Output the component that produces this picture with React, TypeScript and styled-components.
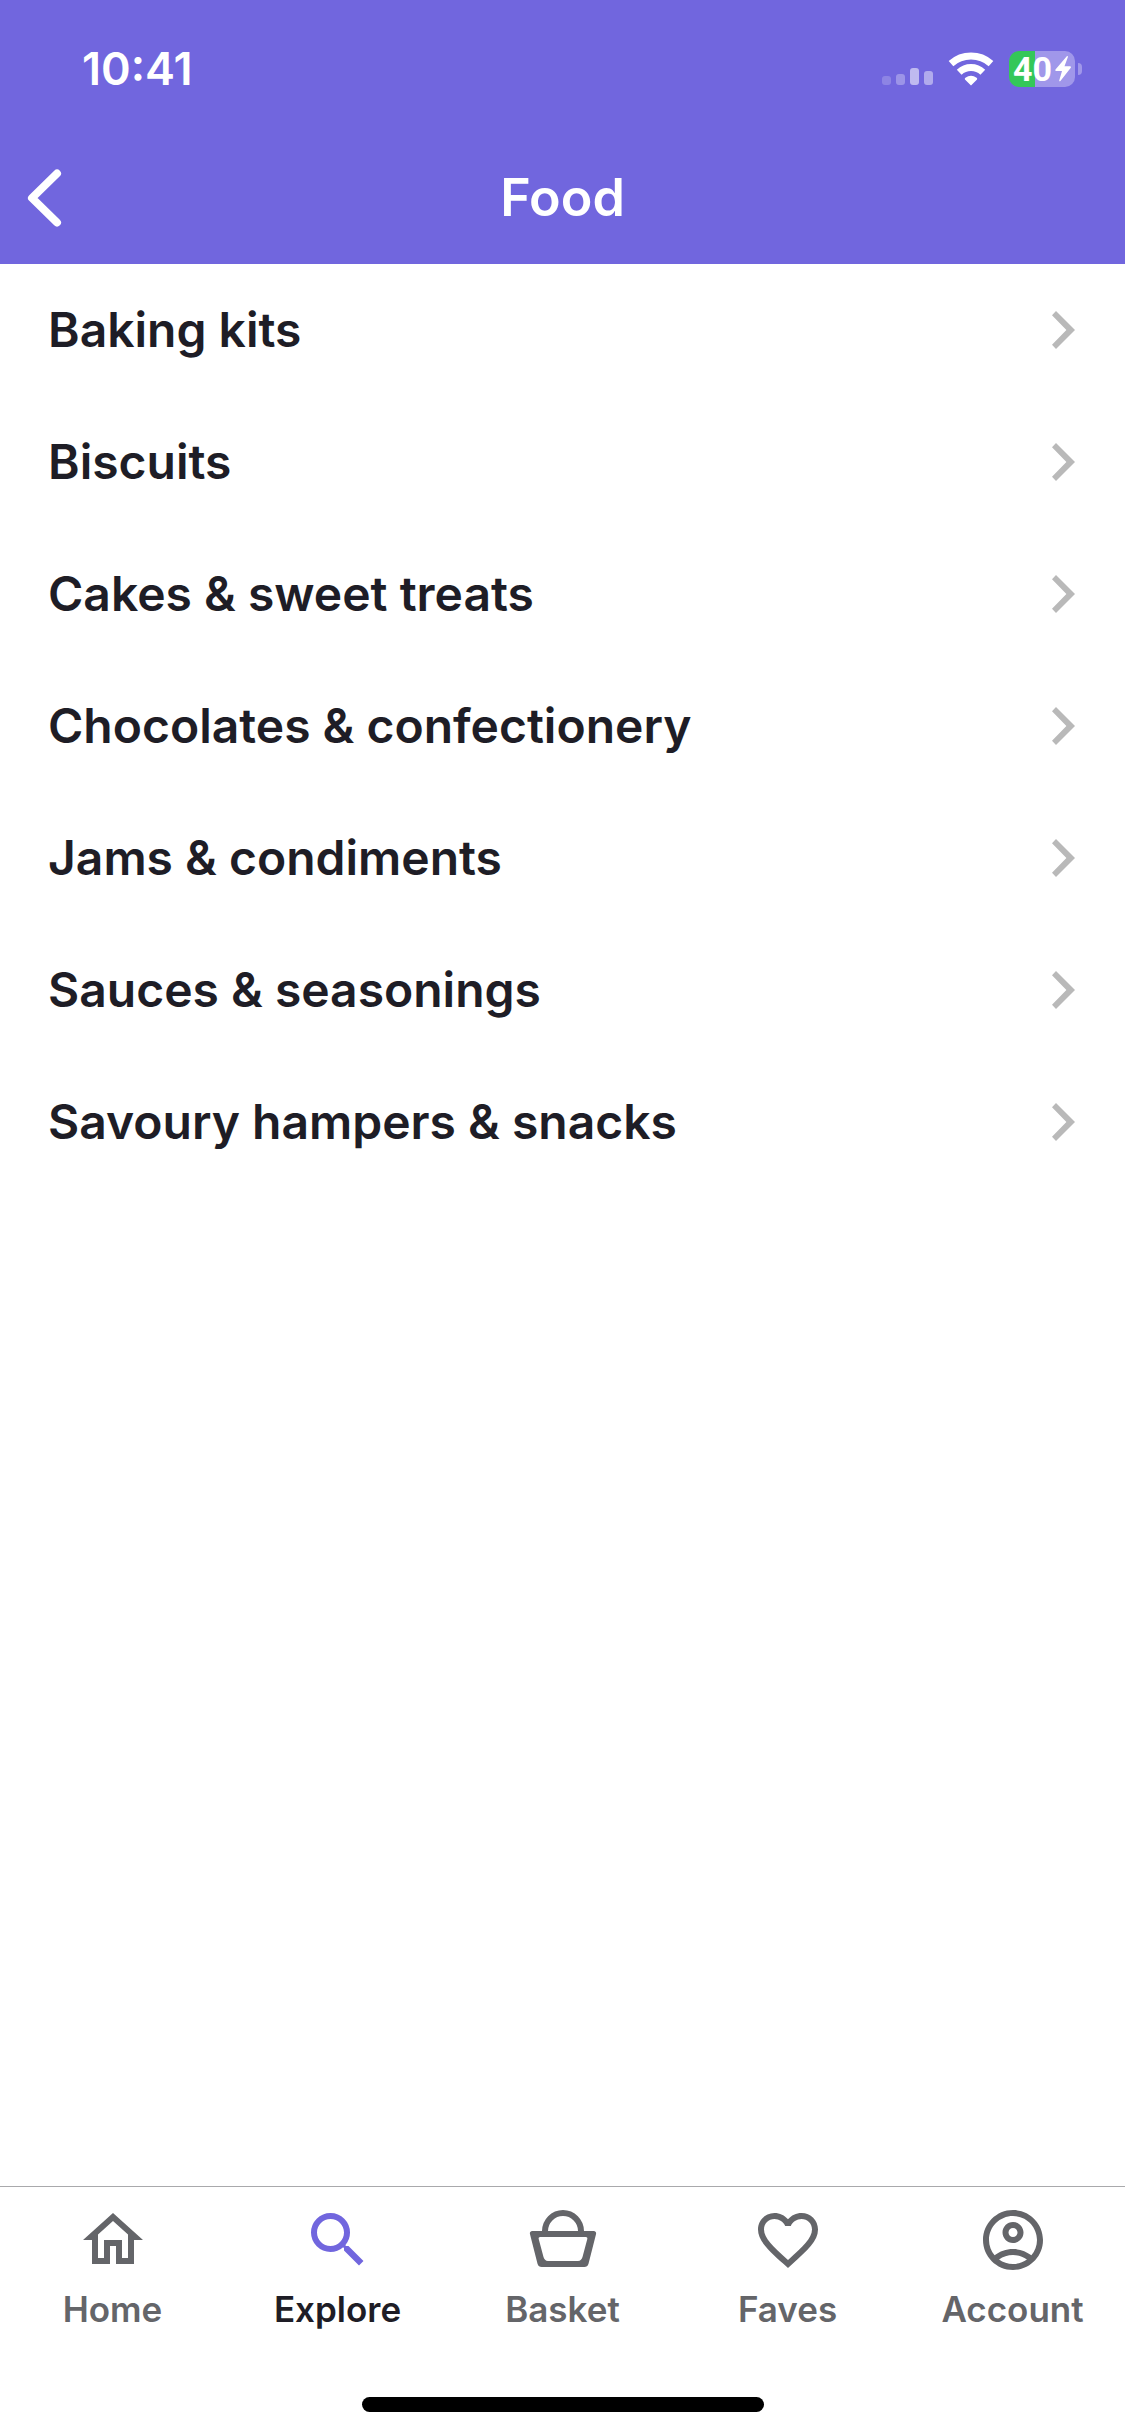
import React from "react";
import styled, { createGlobalStyle } from "styled-components";

const color = {
  brand: "#7166de",
  ink: "#1e1d26",
  muted: "#646569",
  chevron: "#b9b9b9",
  line: "#a9a9ac",
};

const GlobalStyle = createGlobalStyle`
  *, *::before, *::after { box-sizing: border-box; }
  body { margin: 0; background: #fff; }
`;

const Screen = styled.div`
  display: flex;
  flex-direction: column;
  min-height: 100vh;
  font-family: Inter, "Open Sans", sans-serif;
  color: ${color.ink};
`;

const Header = styled.header`
  background: ${color.brand};
  color: #fff;
`;

const StatusBar = styled.div`
  display: flex;
  align-items: center;
  justify-content: space-between;
  height: 138px;
  padding: 0 43px 0 82px;
`;

const Clock = styled.time`
  font-size: 45px;
  font-weight: 600;
  line-height: 54px;
`;

const StatusIcons = styled.div`
  display: flex;
  align-items: center;
  gap: 15px;
`;

const Battery = styled.div`
  display: flex;
  align-items: center;
  gap: 3px;
`;

const BatteryBody = styled.div`
  display: flex;
  align-items: center;
  justify-content: center;
  gap: 3px;
  width: 66px;
  height: 36px;
  border-radius: 10px;
  background: linear-gradient(90deg, #34c759 40%, #a097ea 40%);
  font: 700 34px/36px Roboto, sans-serif;
`;

const BatteryTip = styled.span`
  width: 4px;
  height: 12px;
  border-radius: 0 4px 4px 0;
  background: #a097ea;
`;

const TitleBar = styled.div`
  display: grid;
  grid-template-columns: 1fr auto 1fr;
  align-items: center;
  height: 126px;
  padding: 0 24px 7px;
`;

const BackButton = styled.button`
  display: flex;
  justify-self: start;
  padding: 0;
  border: 0;
  background: none;
  color: inherit;
  cursor: pointer;
`;

const Title = styled.h1`
  margin: 0;
  font-size: 52px;
  font-weight: 600;
  line-height: 64px;
`;

const Main = styled.main`
  flex: 1;
`;

const CategoryList = styled.ul`
  margin: 0;
  padding: 0;
  list-style: none;
`;

const CategoryLink = styled.a`
  display: flex;
  align-items: center;
  justify-content: space-between;
  height: 132px;
  padding: 0 48px;
  color: inherit;
  font-size: 48px;
  font-weight: 600;
  line-height: 60px;
  text-decoration: none;
`;

const TabBar = styled.nav`
  display: grid;
  grid-template-columns: repeat(5, 1fr);
  padding-top: 17px;
  border-top: 1px solid ${color.line};
`;

const Tab = styled.a<{ $active: boolean }>`
  display: flex;
  flex-direction: column;
  align-items: center;
  gap: 12px;
  color: ${(p) => (p.$active ? color.ink : color.muted)};
  font-size: 35px;
  font-weight: 600;
  line-height: 42px;
  text-decoration: none;

  svg {
    color: ${(p) => (p.$active ? color.brand : color.muted)};
  }
`;

const IndicatorArea = styled.div`
  display: flex;
  justify-content: center;
  padding: 67px 0 24px;
`;

const HomeIndicator = styled.span`
  width: 402px;
  height: 15px;
  border-radius: 8px;
  background: #000;
`;

const SignalIcon = () => (
  <svg width="51" height="34" viewBox="0 0 51 34" fill="#fff" aria-label="Signal">
    <rect x="0" y="24" width="9" height="9" rx="3" opacity="0.2" />
    <rect x="14" y="22" width="9" height="11" rx="3" opacity="0.3" />
    <rect x="28" y="16" width="9" height="17" rx="3" opacity="0.55" />
    <rect x="42" y="19" width="9" height="14" rx="3" opacity="0.45" />
  </svg>
);

const WifiIcon = () => (
  <svg width="46" height="34" viewBox="0 0 46 34" fill="none" stroke="#fff" strokeWidth="7" aria-label="Wi-Fi">
    <path d="M3 11.6C8.4 6.800 15.300 4 23 4s14.600 2.800 20 7.600" />
    <path d="M11.200 20.200C14.300 17.300 18.400 15.500 23 15.500s8.700 1.800 11.800 4.700" />
    <path d="M23 33.500 17.200 27.700c-.6-.6-.5-1.400.2-1.900a9.500 9.500 0 0 1 11.200 0c.7.5.8 1.300.2 1.900z" fill="#fff" stroke="none" />
  </svg>
);

const BoltIcon = () => (
  <svg width="16" height="26" viewBox="0 0 16 26" fill="#fff" aria-label="Charging">
    <path d="M11.600.500.700 13.200c-.8.900-.4 1.800.7 1.800H7L4.300 24.200c-.3 1.200.5 1.500 1.300.6L15.600 12c.7-.9.400-1.700-.7-1.700H9.500L12.800 1.300c.4-1.200-.4-1.700-1.200-.8z" />
  </svg>
);

const BackIcon = () => (
  <svg width="42" height="60" viewBox="0 0 42 60" fill="none" stroke="currentColor" strokeWidth="8" strokeLinecap="round" strokeLinejoin="round" aria-hidden="true">
    <path d="M33 5.500 8 30 33 54.500" />
  </svg>
);

const ChevronIcon = () => (
  <svg width="25" height="38" viewBox="0 0 25 38" fill={color.chevron} aria-hidden="true">
    <path d="M4 0 0 4.200 14.400 19 0 33.800 4 38 23 19z" />
  </svg>
);

const tabPaths = {
  Home: "M12 5.690l5 4.500V18h-2v-6H9v6H7v-7.810l5-4.500M12 3L2 12h3v8h6v-6h2v6h6v-8h3L12 3z",
  Explore:
    "M15.500 14h-.79l-.28-.27A6.471 6.471 0 0 0 16 9.500 6.500 6.500 0 1 0 9.500 16c1.610 0 3.090-.59 4.230-1.570l.27.28v.79l5 4.990L20.490 19l-4.990-5zm-6 0C7.010 14 5 11.990 5 9.500S7.010 5 9.500 5 14 7.010 14 9.500 11.990 14 9.500 14z",
  Basket:
    "M5 9a7 7 0 0 1 14 0h3.200c.6 0 1 .5.8 1.100l-2.500 9.800c-.2.700-.7 1.100-1.400 1.100H4.900c-.7 0-1.200-.4-1.400-1.100L1 10.100C.8 9.500 1.200 9 1.800 9H5zm2 0h10a5 5 0 0 0-10 0zm-2.600 2c-.4 0-.6.3-.5.700l1.600 6c.2.800.7 1.300 1.500 1.300h10c.8 0 1.300-.5 1.500-1.300l1.600-6c.1-.4-.1-.7-.5-.7H4.400z",
  Faves:
    "M16.500 3c-1.740 0-3.410.81-4.500 2.090C10.910 3.810 9.240 3 7.500 3 4.420 3 2 5.420 2 8.500c0 3.780 3.400 6.860 8.550 11.540L12 21.350l1.450-1.320C18.600 15.360 22 12.280 22 8.500 22 5.420 19.580 3 16.500 3zm-4.400 15.550l-.1.100-.1-.1C7.140 14.240 4 11.390 4 8.500 4 6.500 5.500 5 7.500 5c1.540 0 3.040.99 3.570 2.360h1.870C13.460 5.990 14.960 5 16.500 5c2 0 3.500 1.500 3.500 3.500 0 2.890-3.140 5.740-7.900 10.050z",
  Account:
    "M12 2C6.480 2 2 6.480 2 12s4.480 10 10 10 10-4.480 10-10S17.520 2 12 2zM7.350 18.500C8.660 17.560 10.260 17 12 17s3.340.56 4.650 1.500C15.340 19.440 13.740 20 12 20s-3.340-.56-4.650-1.500zm10.790-1.380C16.450 15.800 14.320 15 12 15s-4.450.8-6.140 2.120C4.700 15.730 4 13.950 4 12c0-4.420 3.580-8 8-8s8 3.580 8 8c0 1.950-.7 3.730-1.860 5.120zM12 6c-1.930 0-3.500 1.570-3.500 3.500S10.070 13 12 13s3.500-1.570 3.500-3.500S13.930 6 12 6zm0 5c-.83 0-1.500-.67-1.500-1.500S11.170 8 12 8s1.500.67 1.500 1.500S12.830 11 12 11z",
};

type TabName = keyof typeof tabPaths;

const TabIcon = ({ name }: { name: TabName }) => (
  <svg width="72" height="72" viewBox="0 0 24 24" fill="currentColor" fillRule="evenodd" aria-hidden="true">
    <path d={tabPaths[name]} />
  </svg>
);

const categories = [
  "Baking kits",
  "Biscuits",
  "Cakes & sweet treats",
  "Chocolates & confectionery",
  "Jams & condiments",
  "Sauces & seasonings",
  "Savoury hampers & snacks",
];

const tabs = Object.keys(tabPaths) as TabName[];

export default function App() {
  const activeTab: TabName = "Explore";
  return (
    <Screen>
      <GlobalStyle />
      <Header>
        <StatusBar>
          <Clock>10:41</Clock>
          <StatusIcons>
            <SignalIcon />
            <WifiIcon />
            <Battery>
              <BatteryBody>
                <span>40</span>
                <BoltIcon />
              </BatteryBody>
              <BatteryTip />
            </Battery>
          </StatusIcons>
        </StatusBar>
        <TitleBar>
          <BackButton type="button" aria-label="Back">
            <BackIcon />
          </BackButton>
          <Title>Food</Title>
        </TitleBar>
      </Header>
      <Main>
        <CategoryList>
          {categories.map((name) => (
            <li key={name}>
              <CategoryLink href="#">
                {name}
                <ChevronIcon />
              </CategoryLink>
            </li>
          ))}
        </CategoryList>
      </Main>
      <TabBar>
        {tabs.map((name) => (
          <Tab key={name} href="#" $active={name === activeTab} aria-current={name === activeTab ? "page" : undefined}>
            <TabIcon name={name} />
            {name}
          </Tab>
        ))}
      </TabBar>
      <IndicatorArea>
        <HomeIndicator />
      </IndicatorArea>
    </Screen>
  );
}
